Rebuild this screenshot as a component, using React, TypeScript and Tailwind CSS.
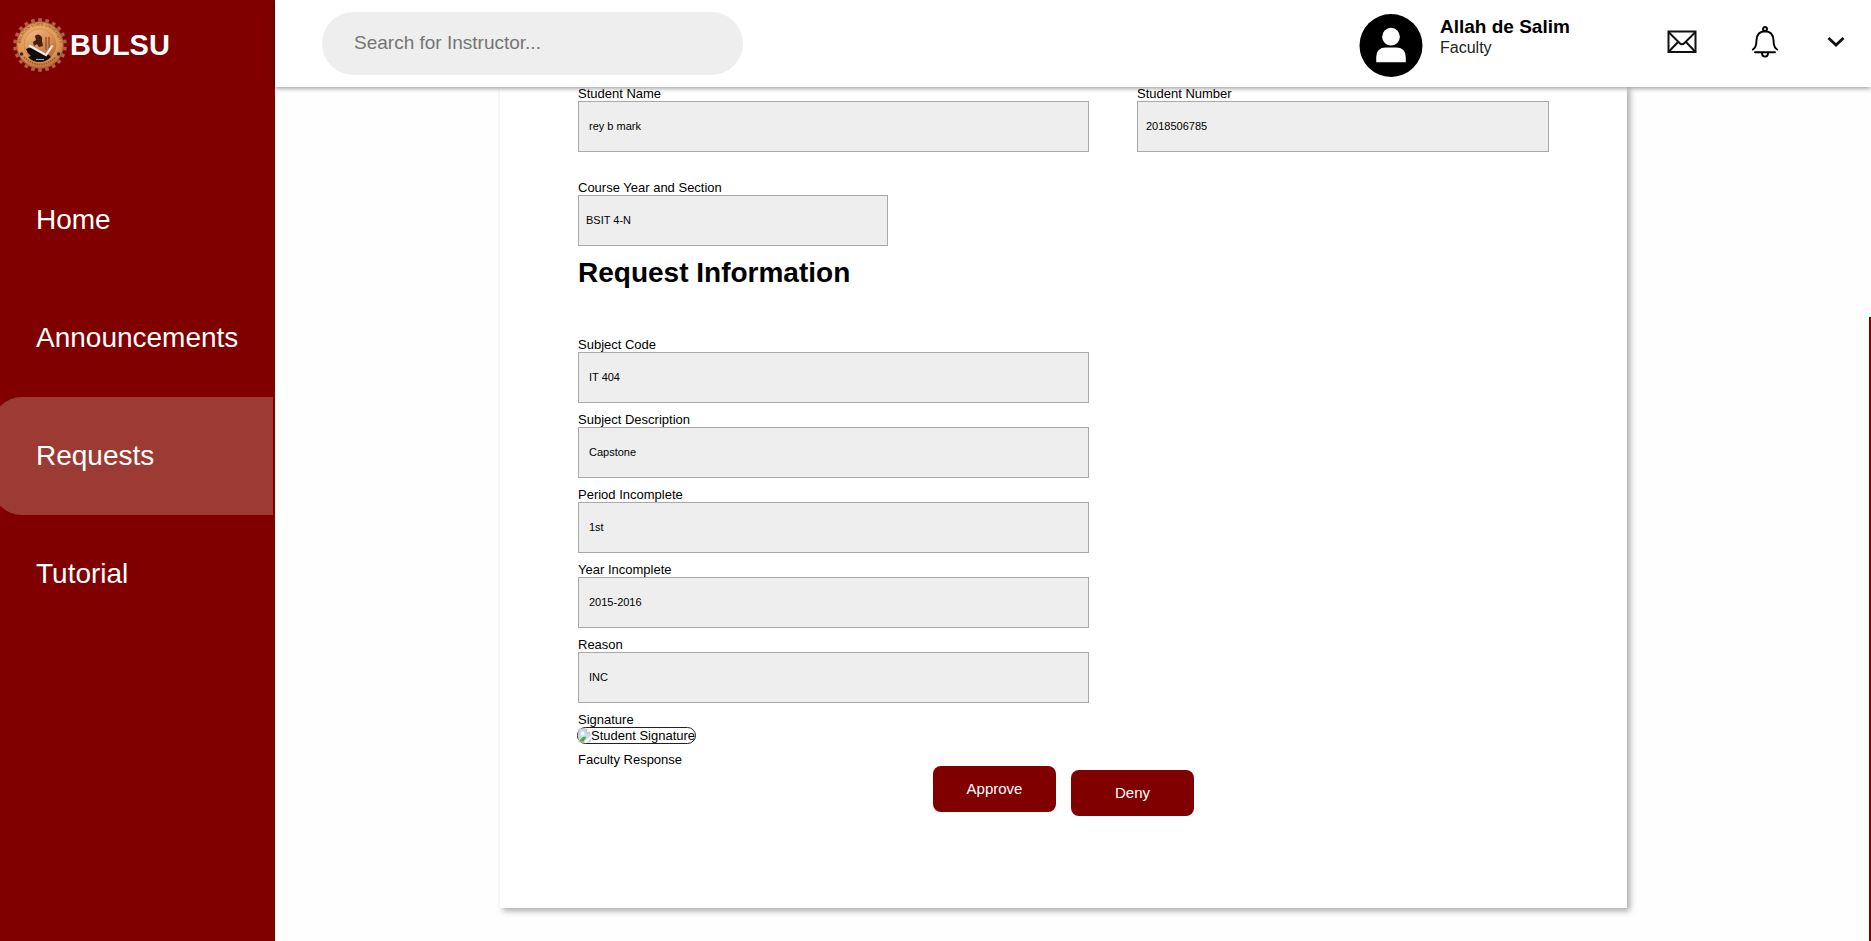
import React from "react";

const NAV_ITEMS = ["Home", "Announcements", "Requests", "Tutorial"];

const REQUEST_FIELDS = [
  { id: "subject-code", label: "Subject Code", value: "IT 404" },
  { id: "subject-description", label: "Subject Description", value: "Capstone" },
  { id: "period-incomplete", label: "Period Incomplete", value: "1st" },
  { id: "year-incomplete", label: "Year Incomplete", value: "2015-2016" },
  { id: "reason", label: "Reason", value: "INC" },
];

function Seal() {
  const teeth = Array.from({ length: 22 }, (_, i) => (i * 360) / 22);
  return (
    <svg viewBox="0 0 54 54" className="h-[54px] w-[54px] shrink-0" aria-hidden="true">
      <defs>
        <radialGradient id="seal-rim" cx="45%" cy="35%" r="70%">
          <stop offset="0" stopColor="#f0b870" />
          <stop offset="0.7" stopColor="#dc9650" />
          <stop offset="1" stopColor="#b4663a" />
        </radialGradient>
        <linearGradient id="seal-core" x1="0" y1="0" x2="0.6" y2="1">
          <stop offset="0" stopColor="#f6c08a" />
          <stop offset="1" stopColor="#c06c34" />
        </linearGradient>
        <path id="seal-arc" d="M8.6 34 A19.6 19.6 0 1 1 45.4 34" />
      </defs>
      {teeth.map((a) => (
        <rect key={a} x="25.2" y="0.2" width="3.6" height="5" fill="#b06048" transform={`rotate(${a} 27 27)`} />
      ))}
      <circle cx="27" cy="27" r="23.8" fill="#a9583a" />
      <circle cx="27" cy="27" r="22.8" fill="url(#seal-rim)" />
      <circle cx="27" cy="27" r="16" fill="url(#seal-core)" stroke="#b87838" strokeWidth="0.5" />
      <text fontSize="4" fill="#6b4514" fontFamily="Liberation Sans, sans-serif">
        <textPath href="#seal-arc" startOffset="50%" textAnchor="middle">
          BULACAN STATE UNIVERSITY
        </textPath>
      </text>
      <path d="M11 39 Q27 54 43 39" fill="none" stroke="#9a5428" strokeWidth="1.6" strokeDasharray="1.4 1" />
      <path d="M22 18 q3 -3 6 0 q2 2 1 5 l1 5 l-4 1 l-2 -3 l-3 2 l-1 -4 l3 -2 z" fill="#42200f" />
      <path d="M33 19 v13 M36 19 v11" stroke="#a05a2c" strokeWidth="1.6" />
      <path d="M13 31 q5 -3 8 0 q5 4 10 4 q5 1 7 4 q-5 5 -11 5 q-8 0 -12 -5 l3 -1 q-4 -3 -5 -7 z" fill="#100c0a" />
      <path d="M16 27.5 L33 37 L39.5 27.5" fill="none" stroke="#eeeaf0" strokeWidth="2.2" />
      <path d="M23 41.5 h8" stroke="#a9a09a" strokeWidth="1.2" />
      <circle cx="8.6" cy="36" r="1.7" fill="#2f2330" />
      <circle cx="45.6" cy="36" r="1.7" fill="#2f2330" />
    </svg>
  );
}

function BrokenImageIcon() {
  return (
    <svg viewBox="0 0 14 16" className="h-[15px] w-[13px] shrink-0" aria-hidden="true">
      <path d="M1 1 H9 L13 5 V15 H1 Z" fill="#c9dbf5" stroke="#c4c4c4" />
      <path d="M9 1 V5 H13" fill="#fff" stroke="#b5b5b5" />
      <circle cx="5" cy="6" r="2" fill="#fff" />
      <path d="M1.5 14.5 Q4 8 9 9.5 L6 14.5 Z" fill="#4fae3a" />
      <path d="M6 15.5 L13.5 8 V11 L9.5 15.5 Z" fill="#fff" />
    </svg>
  );
}

type FieldProps = { id: string; label: string; value: string; pad?: string };

function Field({ id, label, value, pad = "px-[10px]" }: FieldProps) {
  return (
    <div className="flex flex-col">
      <label htmlFor={id} className="text-[13px] leading-[15px]">
        {label}
      </label>
      <input
        id={id}
        readOnly
        defaultValue={value}
        className={`h-[51px] w-full border border-[#a9a9a9] bg-[#eeeeee] pb-[2px] text-[11px] outline-none ${pad}`}
      />
    </div>
  );
}

function Sidebar() {
  return (
    <aside className="w-[275px] shrink-0 overflow-hidden bg-[#800000] text-white">
      <div className="flex h-[161px] items-start pt-[18px] pl-[13px]">
        <Seal />
        <span className="pl-[3px] text-[29px] leading-[54px] font-bold">BULSU</span>
      </div>
      <nav className="-ml-2 flex flex-col pr-[2px]">
        {NAV_ITEMS.map((item) => (
          <a
            key={item}
            href="#"
            aria-current={item === "Requests" ? "page" : undefined}
            className={`flex h-[118px] items-center rounded-l-[30px] pl-11 text-[28px] ${
              item === "Requests" ? "bg-[#9c3b33]" : ""
            }`}
          >
            {item}
          </a>
        ))}
      </nav>
    </aside>
  );
}

function Header() {
  return (
    <header className="z-10 -mb-px flex h-[87px] items-center justify-between bg-white pr-[26px] pl-[47px] shadow-[0_1px_5px_rgba(0,0,0,0.45)]">
      <input
        type="search"
        aria-label="Search for Instructor"
        placeholder="Search for Instructor..."
        className="h-[63px] w-[421px] rounded-full bg-[#eeeeee] px-8 pb-[2px] text-[19px] outline-none placeholder:text-[#757575]"
      />
      <div className="flex items-center">
        <svg viewBox="0 0 64 64" className="mt-1 h-[63px] w-16" aria-hidden="true">
          <circle cx="32" cy="32" r="32" fill="#000" />
          <circle cx="32" cy="23" r="9" fill="#fff" />
          <path d="M17 49 V44 Q17 34 27 34 H37 Q47 34 47 44 V49 Z" fill="#fff" />
        </svg>
        <div className="mb-[14px] w-[244px] pl-[17px]">
          <p className="text-[19px] leading-[22px] font-bold">Allah de Salim</p>
          <p className="text-[16px] leading-[19px] text-[#222222]">Faculty</p>
        </div>
        <button type="button" aria-label="Messages" className="mb-[3px]">
          <svg viewBox="0 0 30 24" className="h-6 w-[30px]" fill="none" stroke="#111" strokeWidth="2">
            <path d="M1.5 1.5 H28.5 V22 H1.5 Z" />
            <path d="M1.5 2 L12.5 13 Q15 15.5 17.5 13 L28.5 2 M1.5 22 L11 12 M28.5 22 L19 12" />
          </svg>
        </button>
        <button type="button" aria-label="Notifications" className="mb-[3px] ml-[54px]">
          <svg viewBox="0 0 28 32" className="h-8 w-7" fill="none" stroke="#000" strokeWidth="1.9" strokeLinecap="round">
            <circle cx="14" cy="3" r="2" />
            <path d="M1.8 23.5 Q5.5 21.5 5.5 14 Q6 5.5 14 5.2 Q22 5.5 22.5 14 Q22.5 21.5 26.2 23.5" />
            <path d="M4 26.3 H24" />
            <path d="M11 27 Q11 30.6 14 30.6 Q17 30.6 17 27" />
          </svg>
        </button>
        <button type="button" aria-label="Account menu" className="mb-[3px] ml-12">
          <svg viewBox="0 0 18 12" className="h-3 w-[18px]" fill="none" stroke="#111" strokeWidth="2.8">
            <path d="M1.5 2 L9 9 L16.5 2" />
          </svg>
        </button>
      </div>
    </header>
  );
}

function RequestCard() {
  return (
    <form
      onSubmit={(e) => e.preventDefault()}
      className="mr-[242px] ml-[225px] bg-white px-[78px] pb-[92px] shadow-[3px_3px_6px_rgba(0,0,0,0.33)]"
    >
      <div className="grid grid-cols-[511fr_412fr] gap-x-12">
        <Field id="student-name" label="Student Name" value="rey b mark" />
        <Field id="student-number" label="Student Number" value="2018506785" pad="px-2" />
      </div>
      <div className="mt-7 w-[310px]">
        <Field id="course" label="Course Year and Section" value="BSIT 4-N" pad="px-[7px]" />
      </div>
      <h2 className="mt-[11px] mb-12 text-[28px] leading-8 font-bold">Request Information</h2>
      <div className="grid grid-cols-[511fr_412fr] gap-x-12">
        <div className="flex flex-col gap-[9px]">
          {REQUEST_FIELDS.map((field) => (
            <Field key={field.id} {...field} />
          ))}
        </div>
      </div>
      <p className="mt-[9px] text-[13px] leading-[15px]">Signature</p>
      <div className="-ml-px flex">
        <span className="flex h-[17px] items-center rounded-[9px] border border-[#222222] text-[13px] leading-[15px]">
          <BrokenImageIcon />
          Student Signature
        </span>
      </div>
      <div className="mt-2 flex items-start">
        <p className="w-[355px] text-[13px] leading-[15px]">Faculty Response</p>
        <div className="flex items-start gap-[15px] pt-[14px] text-[15px] text-white">
          <button type="button" className="h-[46px] w-[123px] rounded-lg bg-[#800000]">
            Approve
          </button>
          <button type="button" className="mt-1 h-[46px] w-[123px] rounded-lg bg-[#800000]">
            Deny
          </button>
        </div>
      </div>
    </form>
  );
}

export default function App() {
  return (
    <div className="flex min-h-screen bg-[#fefefe] font-['Liberation_Sans',Arial,sans-serif] text-black">
      <Sidebar />
      <div className="flex min-w-0 flex-1 flex-col">
        <Header />
        <div className="flex flex-1">
          <main className="min-w-0 flex-1 pb-[33px]">
            <RequestCard />
          </main>
          <div className="flex w-[2px] flex-col pt-[231px]">
            <div className="flex-1 bg-[#800000]" />
          </div>
        </div>
      </div>
    </div>
  );
}
